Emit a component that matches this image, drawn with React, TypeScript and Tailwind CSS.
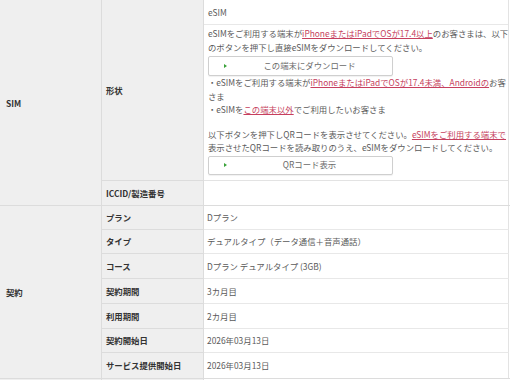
import React from 'react';

const FONT = { fontFamily: '"Noto Sans CJK JP", "Noto Sans", sans-serif' };

const Link: React.FC<{ children: React.ReactNode }> = ({ children }) => (
  <span className="text-[#c63f5e] underline underline-offset-[1px]">{children}</span>
);

const ActionButton: React.FC<{ label: string; className?: string }> = ({ label, className = '' }) => (
  <div
    className={`relative flex w-[185px] items-center justify-center rounded-[2px] border border-[#cfcfcf] bg-white pl-[26px] pr-[8px] text-[#6a6a6a] shadow-[0_1px_1px_rgba(0,0,0,0.06)] ${className}`}
  >
    <span className="absolute left-[15px] top-1/2 h-0 w-0 -translate-y-1/2 border-y-[2.5px] border-l-[3.5px] border-y-transparent border-l-[#3aa23a]" />
    {label}
  </div>
);

const contractRows: { label: string; value: string; h: string }[] = [
  { label: 'プラン', value: 'Dプラン', h: 'h-[24px]' },
  { label: 'タイプ', value: 'デュアルタイプ（データ通信＋音声通話）', h: 'h-[24px]' },
  { label: 'コース', value: 'Dプラン デュアルタイプ (3GB)', h: 'h-[25px]' },
  { label: '契約期間', value: '3カ月目', h: 'h-[25px]' },
  { label: '利用期間', value: '2カ月目', h: 'h-[25px]' },
  { label: '契約開始日', value: '2026年03月13日', h: 'h-[24px]' },
  { label: 'サービス提供開始日', value: '2026年03月13日', h: 'h-[25px]' },
];

export default function App() {
  return (
    <div className="h-[380px] w-[510px] overflow-hidden bg-white text-[8.4px] text-[#5a5a5a]" style={FONT}>
      {/* SIM section */}
      <div className="flex border-b border-[#dcdcdc]">
        <div className="flex w-[102px] items-center border-r border-[#dcdcdc] bg-[#efefef] pl-[6px] pt-[2px] font-bold text-[#333]">
          SIM
        </div>
        <div className="flex flex-col">
          <div className="flex">
            <div className="flex w-[102px] items-center border-r border-b border-[#dcdcdc] bg-[#efefef] pl-[4px] font-bold text-[#333]">
              形状
            </div>
            <div className="flex w-[305px] flex-col border-r border-[#e3e3e3]">
              <div className="flex h-[25px] items-center border-b border-[#e8e8e8] pl-[4px]">eSIM</div>
              <div className="h-[156px] whitespace-nowrap border-b border-[#e3e3e3] px-[4px] pt-[2px] leading-[13.5px]">
                <div>
                  eSIMをご利用する端末が<Link>iPhoneまたはiPadでOSが17.4以上</Link>のお客さまは、以下
                </div>
                <div>のボタンを押下し直接eSIMをダウンロードしてください。</div>
                <ActionButton label="この端末にダウンロード" className="mt-[2px] h-[20px]" />
                <div>
                  ・eSIMをご利用する端末が<Link>iPhoneまたはiPadでOSが17.4未満、Androidの</Link>お客
                </div>
                <div>さま</div>
                <div>
                  ・eSIMを<Link>この端末以外</Link>でご利用したいお客さま
                </div>
                <div className="mt-[11px]">
                  以下ボタンを押下しQRコードを表示させてください。<Link>eSIMをご利用する端末で</Link>
                </div>
                <div>表示させたQRコードを読み取りのうえ、eSIMをダウンロードしてください。</div>
                <ActionButton label="QRコード表示" className="mt-[1px] h-[19px]" />
              </div>
            </div>
          </div>
          <div className="flex h-[24px]">
            <div className="flex w-[102px] items-center border-r border-[#dcdcdc] bg-[#efefef] pl-[4px] font-bold text-[#333]">
              ICCID/製造番号
            </div>
            <div className="w-[305px] border-r border-[#e3e3e3]" />
          </div>
        </div>
      </div>

      {/* 契約 section */}
      <div className="flex border-b border-[#dcdcdc]">
        <div className="flex w-[102px] items-center border-r border-[#dcdcdc] bg-[#efefef] pl-[6px] font-bold text-[#333]">
          契約
        </div>
        <div className="flex flex-col">
          {contractRows.map((row, i) => (
            <div key={row.label} className={`flex ${row.h}`}>
              <div
                className={`flex w-[102px] items-center border-r border-[#dcdcdc] bg-[#efefef] pl-[4px] font-bold text-[#333] ${
                  i < contractRows.length - 1 ? 'border-b' : ''
                }`}
              >
                {row.label}
              </div>
              <div
                className={`flex w-[305px] items-center border-r border-[#e3e3e3] pl-[3px] ${
                  i < contractRows.length - 1 ? 'border-b border-b-[#e8e8e8]' : ''
                }`}
              >
                {row.value}
              </div>
            </div>
          ))}
        </div>
      </div>
      <div className="flex h-[10px]">
        <div className="w-[102px] border-r border-[#dcdcdc] bg-[#efefef]" />
        <div className="w-[102px] border-r border-[#dcdcdc] bg-[#efefef]" />
      </div>
    </div>
  );
}
